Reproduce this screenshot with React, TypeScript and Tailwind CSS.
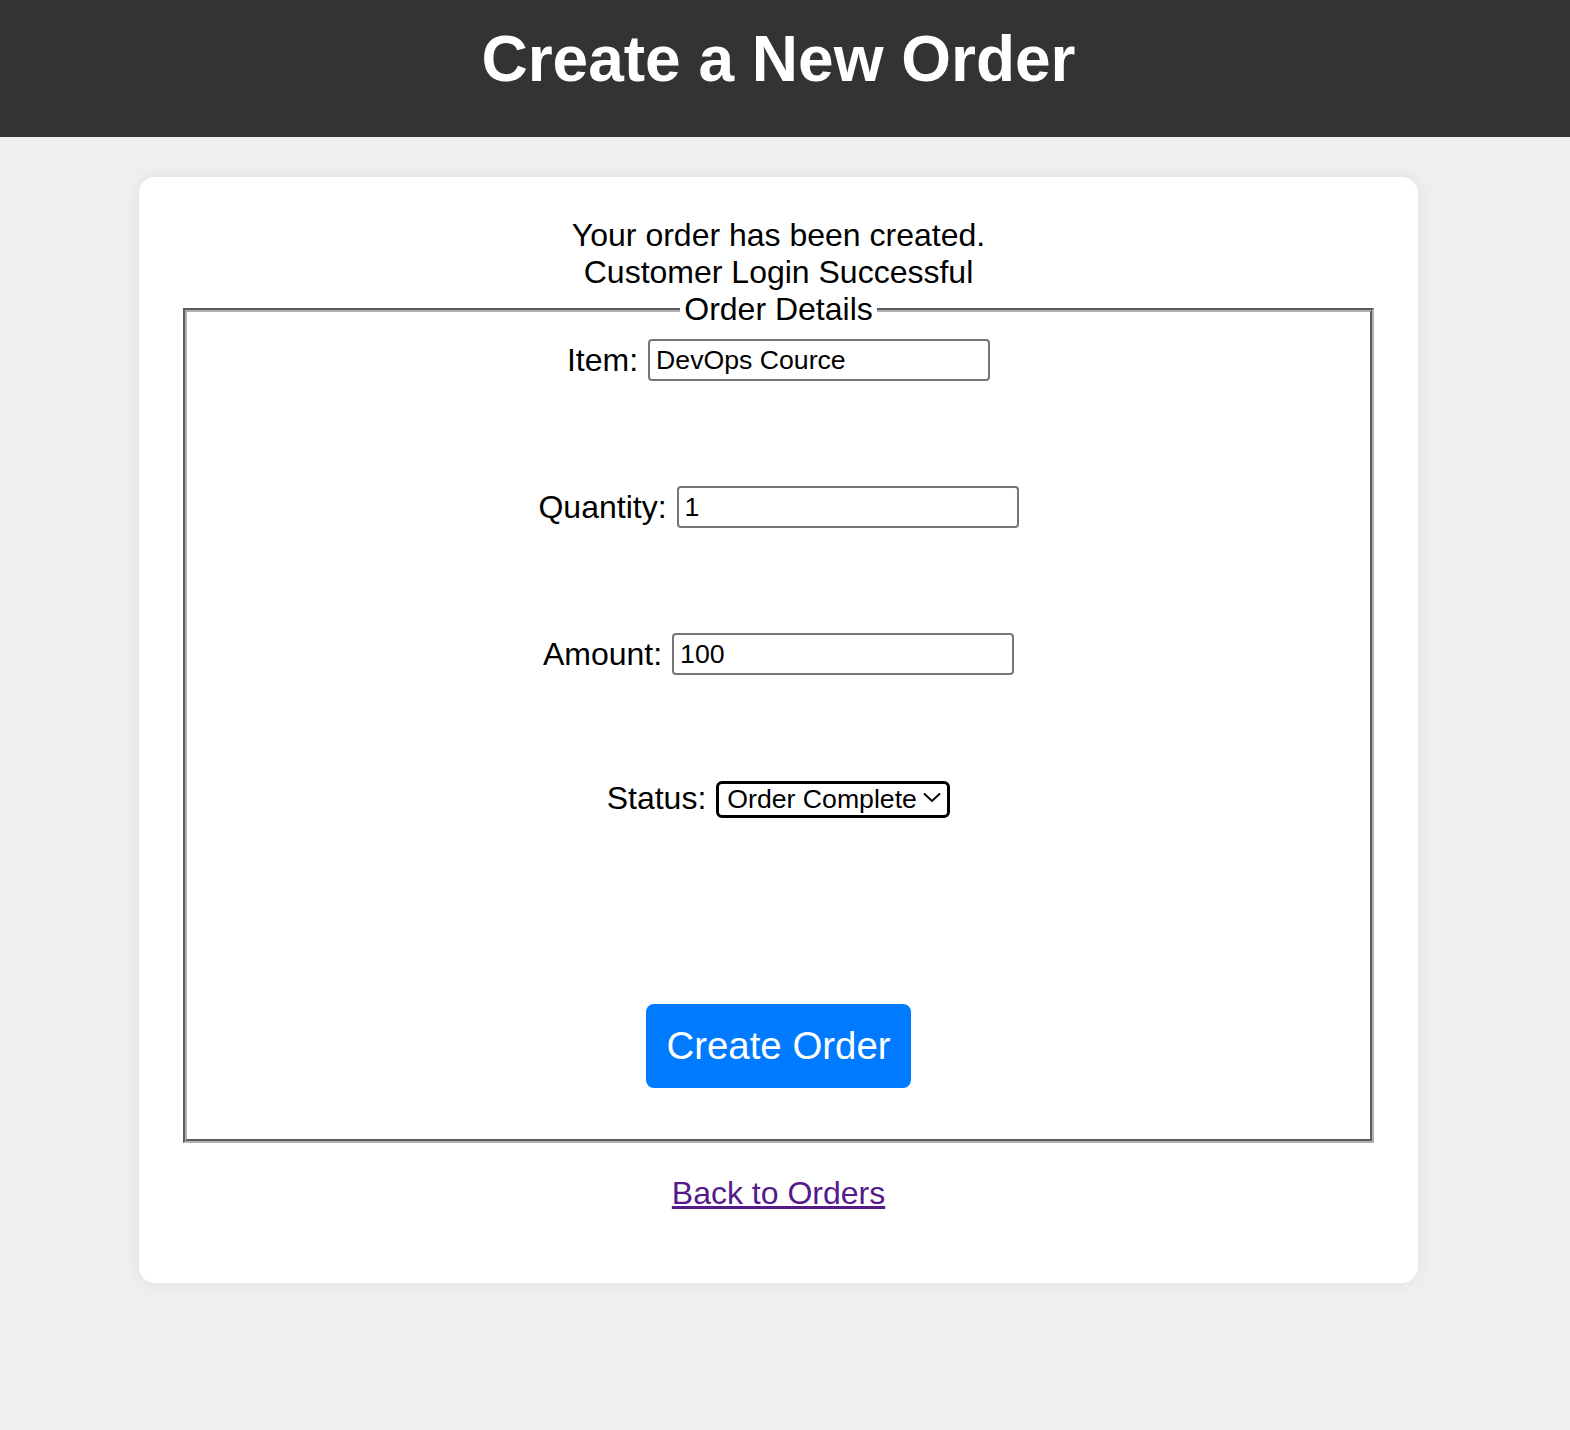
import React from "react";
import { useState } from "react";

const font = "font-['Liberation_Sans',Arial,sans-serif]";

export default function App() {
  const [item, setItem] = useState("DevOps Cource");
  const [quantity, setQuantity] = useState("1");
  const [amount, setAmount] = useState("100");
  const [status, setStatus] = useState("Order Complete");

  const inputClass =
    "w-[342px] h-[42px] border-2 border-[#767676] rounded-[4px] bg-white px-[6px] text-[26.67px] text-black outline-none";

  return (
    <div className={`min-h-[1430px] bg-[#f0f0f0] ${font}`}>
      {/* ヘッダー */}
      <header className="bg-[#333333] h-[137px] pt-[22px] pr-[13px]">
        <h1 className="text-white text-[64px] font-bold text-center leading-[74px]">Create a New Order</h1>
      </header>

      <div className="flex justify-center pt-[40px] pr-[13px]">
        <div className="w-[1279px] bg-white rounded-[16px] shadow-[0_0_20px_rgba(0,0,0,0.08)] px-[40px] pt-[40px] pb-[39px] text-center text-black text-[32px] leading-[37px]">
          <p>Your order has been created.</p>
          <p>Customer Login Successful</p>

          <fieldset className="mx-[4px] border-4 [border-style:groove] border-[#b0b0b0] px-[24px] pb-[51px]">
            <legend className="mx-auto px-[4px] leading-[37px]">Order Details</legend>

            <div className="flex flex-col items-center mt-[11px]">
              <div className="flex items-center gap-[10px]">
                <label>Item:</label>
                <input className={inputClass} value={item} onChange={(e) => setItem(e.target.value)} />
              </div>

              <div className="flex items-center gap-[10px] mt-[105px]">
                <label>Quantity:</label>
                <input className={inputClass} value={quantity} onChange={(e) => setQuantity(e.target.value)} />
              </div>

              <div className="flex items-center gap-[10px] mt-[105px]">
                <label>Amount:</label>
                <input className={inputClass} value={amount} onChange={(e) => setAmount(e.target.value)} />
              </div>

              <div className="flex items-center gap-[10px] mt-[104px]">
                <label>Status:</label>
                <div className="relative">
                  <select
                    className="appearance-none w-[234px] h-[37px] border-[3px] border-black rounded-[6px] bg-white pl-[8px] pr-[30px] text-[26.67px] leading-[30px] text-black outline-none"
                    value={status}
                    onChange={(e) => setStatus(e.target.value)}
                  >
                    <option>Order Complete</option>
                    <option>Order Pending</option>
                  </select>
                  <svg
                    className="absolute right-[9px] top-[13px] pointer-events-none"
                    width="18"
                    height="11"
                    viewBox="0 0 18 11"
                    fill="none"
                    stroke="black"
                    strokeWidth="2"
                  >
                    <path d="M1 1.5 L9 9 L17 1.5" />
                  </svg>
                </div>
              </div>

              <button className="mt-[186px] bg-[#007bff] text-white text-[38.4px] leading-[44px] px-[20px] py-[20px] rounded-[8px]">
                Create Order
              </button>
            </div>
          </fieldset>

          <p className="mt-[32px] mb-[32px]">
            <a href="#" className="text-[#551a8b] underline">Back to Orders</a>
          </p>
        </div>
      </div>
    </div>
  );
}
